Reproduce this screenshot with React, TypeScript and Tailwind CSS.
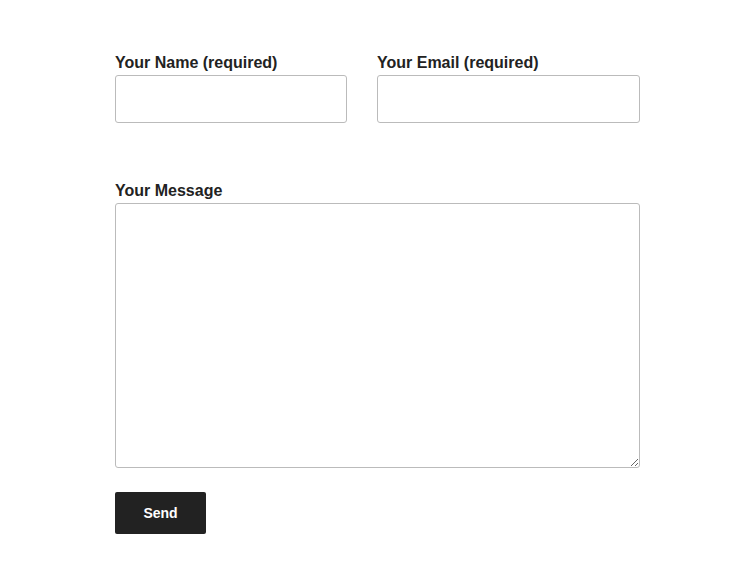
export default function App() {
  return (
    <div className="min-h-screen bg-white font-['Liberation_Sans',Arial,sans-serif] text-[#222]">
      <form className="ml-[115px] w-[525px] pt-[53px]" onSubmit={(e) => e.preventDefault()}>
        <div className="flex gap-[30px]">
          <div className="w-[232px]">
            <label className="block pb-[2px] text-[16px] font-bold leading-[20px] text-[#222]">Your Name (required)</label>
            <input type="text" className="block h-[48px] w-full rounded-[3px] border border-[#bbb] bg-white px-3 outline-none" />
          </div>
          <div className="flex-1">
            <label className="block pb-[2px] text-[16px] font-bold leading-[20px] text-[#222]">Your Email (required)</label>
            <input type="email" className="block h-[48px] w-full rounded-[3px] border border-[#bbb] bg-white px-3 outline-none" />
          </div>
        </div>
        <div className="mt-[58px]">
          <label className="block pb-[2px] text-[16px] font-bold leading-[20px] text-[#222]">Your Message</label>
          <textarea className="block h-[265px] w-full rounded-[3px] border border-[#bbb] bg-white p-3 outline-none" />
        </div>
        <button
          type="submit"
          className="mt-[24px] h-[42px] w-[91px] rounded-[2px] bg-[#222] text-[14px] font-bold text-white"
        >
          Send
        </button>
      </form>
    </div>
  );
}
